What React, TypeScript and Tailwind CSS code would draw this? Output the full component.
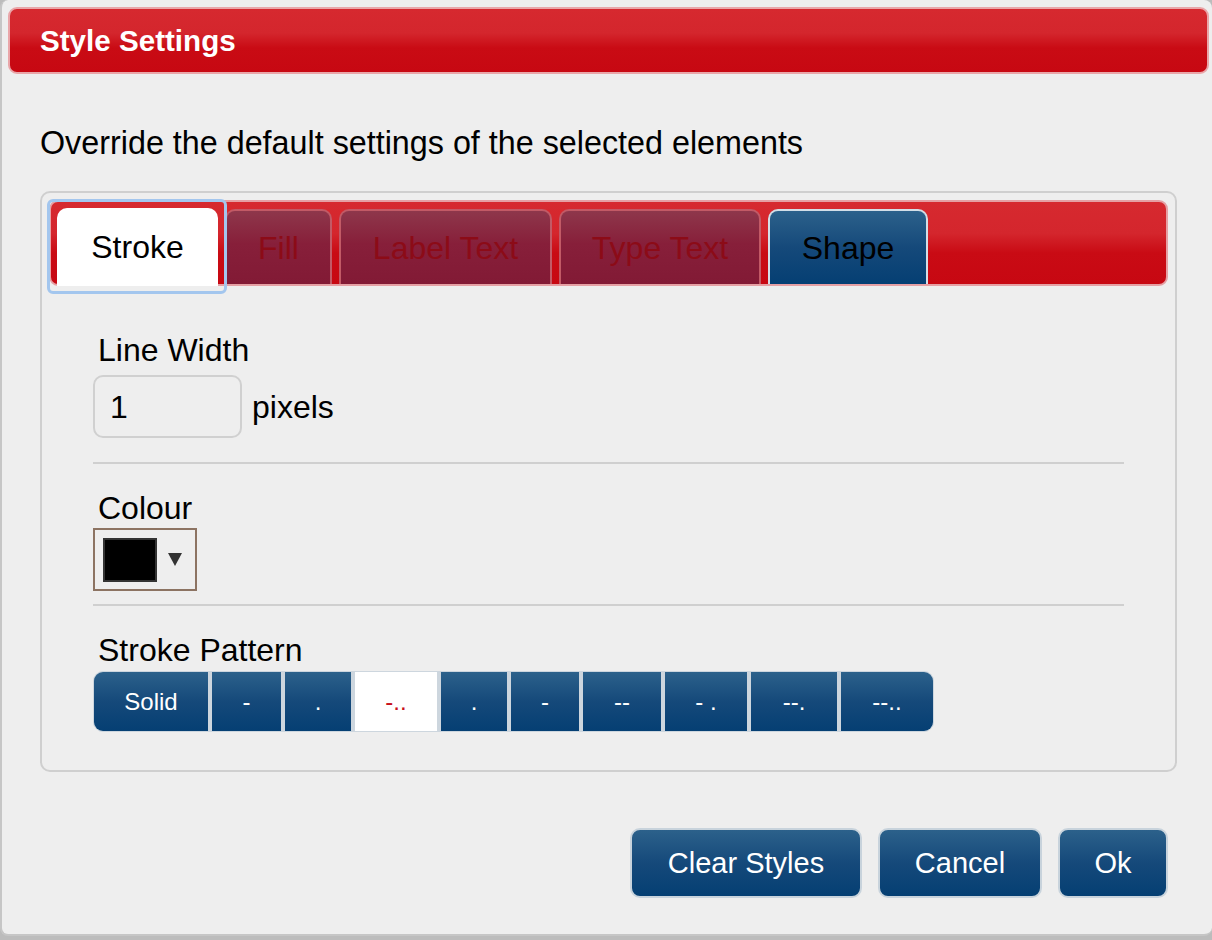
import React from 'react';

const font = { fontFamily: '"Liberation Sans", Arial, sans-serif' };

const patterns: { label: string; w: string; active?: boolean }[] = [
  { label: 'Solid', w: 'w-[114px]' },
  { label: '-', w: 'w-[69px]' },
  { label: '.', w: 'w-[66px]' },
  { label: '-..', w: 'w-[82px]', active: true },
  { label: '.', w: 'w-[66px]' },
  { label: '-', w: 'w-[68px]' },
  { label: '--', w: 'w-[78px]' },
  { label: '- .', w: 'w-[82px]' },
  { label: '--.', w: 'w-[86px]' },
  { label: '--..', w: 'w-[92px]' },
];

const redGrad = 'bg-[linear-gradient(#d6292f_0%,#d4262d_38%,#c90b14_62%,#c70812_100%)]';
const blueGrad = 'bg-[linear-gradient(#2c618b_0%,#15497a_50%,#053f73_100%)]';
const dimGrad = 'bg-[linear-gradient(#8e374b_0%,#871f3a_45%,#821a35_100%)]';

function InactiveTab({ label, w }: { label: string; w: string }) {
  return (
    <div
      className={`${w} h-[75px] ${dimGrad} border-2 border-b-0 border-[#c25a66] rounded-t-[10px] flex items-center justify-center text-[32px] text-[#8c0b17] leading-none`}
    >
      {label}
    </div>
  );
}

export default function App() {
  return (
    <div className="min-h-[940px] bg-[#bcbcbc]" style={font}>
      <div className="h-[936px] bg-[#eeeeee] rounded-[8px] border-l-2 border-b-2 border-[#c6c6c6] flex flex-col">
        {/* header */}
        <div className={`ml-[6px] mr-[3px] mt-[7px] h-[67px] rounded-[9px] border-2 border-[#e9a6a9] ${redGrad} flex items-center pl-[30px]`}>
          <span className="text-[29.6px] font-bold text-white leading-none">Style Settings</span>
        </div>

        <p className="ml-[38px] mt-[53px] text-[32.3px] leading-none text-black">
          Override the default settings of the selected elements
        </p>

        {/* panel */}
        <div className="ml-[38px] mt-[32px] w-[1137px] h-[581px] border-2 border-[#cfcfcf] rounded-[10px] p-[7px] flex flex-col">
          <div className={`h-[86px] rounded-[9px] border-2 border-[#e5a0a4] ${redGrad} flex items-end pl-[6px] gap-[7px]`}>
            <div className="relative w-[161px] h-[78px] -mb-[2px] bg-white rounded-t-[10px] flex items-center justify-center text-[32px] text-black leading-none">
              <div className="absolute -top-[9px] -left-[10px] -right-[9px] -bottom-[8px] rounded-[6px] border-[3px] border-[#a3c6ee]" />
              Stroke
            </div>
            <InactiveTab label="Fill" w="w-[107px]" />
            <InactiveTab label="Label Text" w="w-[213px]" />
            <InactiveTab label="Type Text" w="w-[202px]" />
            <div
              className={`w-[160px] h-[75px] ${blueGrad} border-2 border-b-0 border-[#d3dee7] rounded-t-[10px] flex items-center justify-center text-[32px] text-black leading-none`}
            >
              Shape
            </div>
          </div>

          <div className="pl-[44px] pr-[44px] flex flex-col">
            <div className="mt-[48px] text-[32px] leading-none pl-[5px]">Line Width</div>
            <div className="mt-[9px] flex items-center gap-[10px]">
              <div className="w-[149px] h-[63px] border-2 border-[#d0d0d0] rounded-[10px] flex items-center pl-[15px] text-[32px] leading-none">
                1
              </div>
              <span className="text-[32px] leading-none">pixels</span>
            </div>
            <div className="mt-[24px] h-[2px] bg-[#cfcfcf]" />

            <div className="mt-[28px] text-[32px] leading-none pl-[5px]">Colour</div>
            <div className="mt-[4px] w-[104px] h-[63px] border-2 border-[#8c7362] flex items-start pl-[8px] pt-[8px] gap-[11px]">
              <div className="w-[54px] h-[44px] bg-black border-2 border-[#333333]" />
              <svg width="14" height="13" viewBox="0 0 14 13" className="mt-[15px]">
                <path d="M0 0 H14 L7 13 Z" fill="#333333" />
              </svg>
            </div>
            <div className="mt-[13px] h-[2px] bg-[#cfcfcf]" />

            <div className="mt-[28px] text-[32px] leading-none pl-[5px]">Stroke Pattern</div>
            <div className="mt-[5px] self-start flex gap-[4px] border border-[#cdd6de] bg-[#cdd6de] rounded-[10px] overflow-hidden">
              {patterns.map((p, i) => (
                <div
                  key={i}
                  className={`${p.w} h-[59px] flex items-center justify-center text-[24px] leading-none ${
                    p.active ? 'bg-white text-[#c8101a]' : `${blueGrad} text-white`
                  }`}
                >
                  {p.label}
                </div>
              ))}
            </div>
          </div>
        </div>

        {/* footer */}
        <div className="mt-[56px] flex justify-end gap-[16px] pr-[44px]">
          {[
            ['Clear Styles', 'w-[232px]'],
            ['Cancel', 'w-[164px]'],
            ['Ok', 'w-[110px]'],
          ].map(([t, w]) => (
            <button
              key={t}
              className={`${w} shrink-0 h-[70px] rounded-[10px] border-2 border-[#c8d3dc] ${blueGrad} text-white text-[29px] leading-none flex items-center justify-center`}
            >
              {t}
            </button>
          ))}
        </div>
      </div>
    </div>
  );
}
